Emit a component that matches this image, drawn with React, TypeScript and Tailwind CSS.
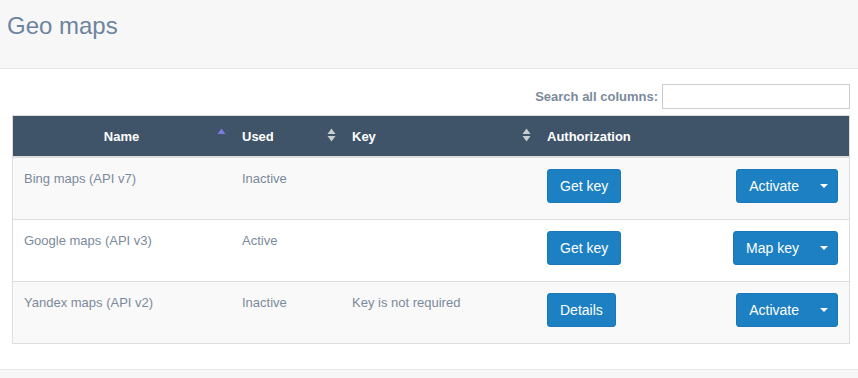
const rows = [
  { name: "Bing maps (API v7)", used: "Inactive", key: "", auth: "Get key", action: "Activate" },
  { name: "Google maps (API v3)", used: "Active", key: "", auth: "Get key", action: "Map key" },
  { name: "Yandex maps (API v2)", used: "Inactive", key: "Key is not required", auth: "Details", action: "Activate" },
];

const SortIcon = ({ active }: { active?: boolean }) => (
  <svg
    width="9"
    height="14"
    viewBox="0 0 9 14"
    className="absolute right-[4px] top-[12px]"
  >
    {active ? (
      <polygon points="0.5,6 4.5,0.5 8.5,6" fill="#7b7be0" />
    ) : (
      <>
        <polygon points="0.5,6 4.5,0.5 8.5,6" fill="#c9cdd2" />
        <polygon points="0.5,8 4.5,13.5 8.5,8" fill="#c9cdd2" />
      </>
    )}
  </svg>
);

const Button = ({ label }: { label: string }) => (
  <button className="h-[34px] px-[12px] rounded-[3px] border border-[#1a78b9] bg-[#1c80c3] text-white text-[14px] leading-[20px]">
    {label}
  </button>
);

const SplitButton = ({ label }: { label: string }) => (
  <div className="flex h-[34px] rounded-[3px] border border-[#1a78b9] bg-[#1c80c3] text-white text-[14px] leading-[20px]">
    <button className="pl-[12px] pr-[12px]">{label}</button>
    <button className="pl-[9px] pr-[9px] flex items-center">
      <svg width="8" height="4" viewBox="0 0 8 4">
        <polygon points="0,0 8,0 4,4" fill="#ffffff" />
      </svg>
    </button>
  </div>
);

export default function App() {
  return (
    <div className="w-[858px] h-[378px] bg-white flex flex-col font-['Liberation_Sans',Arial,sans-serif] overflow-hidden">
      <div className="h-[69px] shrink-0 bg-[#f7f7f7] border-b border-[#e4e8ec]">
        <h1 className="pl-[7px] pt-[14px] text-[24px] leading-[24px] text-[#6c84a0]">Geo maps</h1>
      </div>

      <div className="pl-[12px] pr-[8px] pt-[15px]">
        <div className="flex justify-end items-center h-[25px]">
          <label className="text-[13px] font-bold text-[#7b8a9b] mr-[4px]">Search all columns:</label>
          <input className="w-[188px] h-[25px] border border-[#cccccc] bg-white outline-none" />
        </div>

        <div className="mt-[6px] border border-[#dddddd] text-[13px] leading-[17px] text-[#7b8a9b]">
          <div className="grid grid-cols-[217px_110px_195px_1fr] h-[42px] bg-[#3f5468] border-b-2 border-[#dddddd] text-white text-[13px] font-bold">
            <div className="relative flex items-center justify-center">
              Name
              <SortIcon active />
            </div>
            <div className="relative flex items-center pl-[12px]">
              Used
              <SortIcon />
            </div>
            <div className="relative flex items-center pl-[12px]">
              Key
              <SortIcon />
            </div>
            <div className="flex items-center pl-[12px]">Authorization</div>
          </div>

          {rows.map((row, i) => (
            <div
              key={row.name}
              className={
                "grid grid-cols-[217px_110px_195px_1fr] h-[61px] box-content " +
                (i > 0 ? "border-t border-[#dddddd] " : "") +
                (i % 2 === 0 ? "bg-[#f9f9f9]" : "bg-white")
              }
            >
              <div className="pl-[11px] pt-[12px]">{row.name}</div>
              <div className="pl-[12px] pt-[12px]">{row.used}</div>
              <div className="pl-[12px] pt-[12px]">{row.key}</div>
              <div className="pl-[12px] pr-[11px] pt-[11px] flex justify-between items-start">
                <Button label={row.auth} />
                <SplitButton label={row.action} />
              </div>
            </div>
          ))}
        </div>
      </div>

      <div className="mt-auto h-[9px] bg-[#f7f7f7] border-t border-[#e4e8ec]" />
    </div>
  );
}
